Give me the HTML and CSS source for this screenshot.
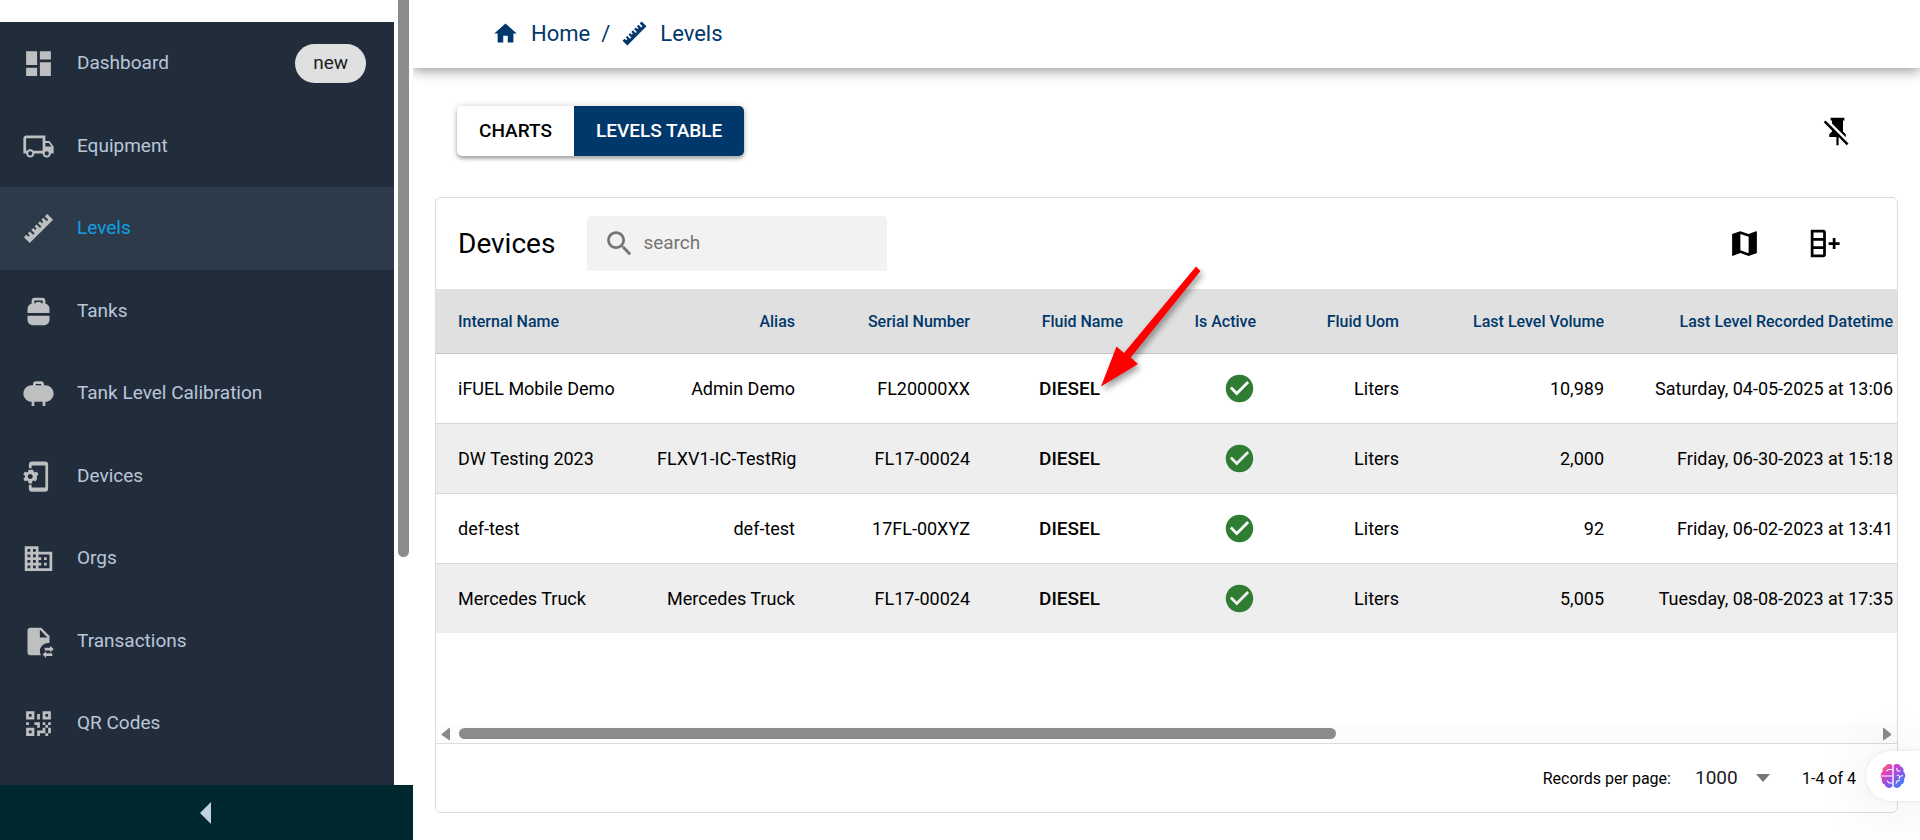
FILE: index.html
```html
<!DOCTYPE html>
<html lang="en">
<head>
<meta charset="utf-8">
<meta name="viewport" content="width=device-width, initial-scale=1">
<title>Levels</title>
<link rel="stylesheet" href="styles.css">
</head>
<body>
<svg class="sprite" aria-hidden="true">
  <symbol id="i-dashboard" viewBox="0 0 24 24"><path d="M13 3v6h8V3zM13 21h8V11h-8zM3 21h8v-6H3zM3 13h8V3H3z"/></symbol>
  <symbol id="i-truck" viewBox="0 0 24 24"><path d="M18 18.5C18.83 18.5 19.5 17.83 19.5 17C19.5 16.17 18.83 15.5 18 15.5C17.17 15.5 16.5 16.17 16.5 17C16.5 17.83 17.17 18.5 18 18.5M19.5 9.5H17V12H21.46L19.5 9.5M6 18.5C6.83 18.5 7.5 17.83 7.5 17C7.5 16.17 6.83 15.5 6 15.5C5.17 15.5 4.5 16.17 4.5 17C4.5 17.83 5.17 18.5 6 18.5M20 8L23 12V17H21C21 18.66 19.66 20 18 20C16.34 20 15 18.66 15 17H9C9 18.66 7.66 20 6 20C4.34 20 3 18.66 3 17H1V6C1 4.89 1.89 4 3 4H17V8H20M3 6V15H3.76C4.31 14.39 5.11 14 6 14C6.89 14 7.69 14.39 8.24 15H15V6H3Z"/></symbol>
  <symbol id="i-ruler" viewBox="0 0 24 24"><path d="M1.39,18.36L3.16,16.6L4.58,18L5.64,16.95L4.22,15.54L5.64,14.12L8.11,16.6L9.17,15.54L6.7,13.06L8.11,11.65L9.53,13.06L10.59,12L9.17,10.59L10.59,9.17L13.06,11.65L14.12,10.59L11.65,8.11L13.06,6.7L14.47,8.11L15.54,7.05L14.12,5.64L15.54,4.22L18,6.7L19.07,5.64L16.6,3.16L18.36,1.39L22.61,5.64L5.64,22.61L1.39,18.36Z"/></symbol>
  <symbol id="i-tank" viewBox="0 0 24 24"><path d="M4 15v3c0 2.21 1.79 4 4 4h8c2.21 0 4-1.79 4-4v-3zM20 13v-3c0-1.86-1.28-3.41-3-3.86V4c0-1.1-.9-2-2-2H9c-1.1 0-2 .9-2 2v2.14C5.28 6.59 4 8.14 4 10v3zM9 4h6v2h-1c0-.55-.45-1-1-1h-2c-.55 0-1 .45-1 1H9z"/></symbol>
  <symbol id="i-propane" viewBox="0 0 24 24"><path d="M17 6h-1V5c0-1.1-.9-2-2-2h-4c-1.1 0-2 .9-2 2v1H7c-2.97 0-5.46 2.16-5.92 5.03C.49 14.75 3.54 18 7 18v3h2v-3h6v3h2v-3c3.46 0 6.51-3.25 5.92-6.97C22.46 8.16 19.97 6 17 6zM10 5h4v1h-4z"/></symbol>
  <symbol id="i-device" viewBox="0 0 24 24"><path transform="translate(-1 0)" d="M11.82 12.49c.02-.16.04-.32.04-.49 0-.17-.02-.33-.04-.49l1.08-.82c.1-.07.12-.21.06-.32l-1.03-1.73c-.06-.11-.2-.15-.31-.11l-1.28.5c-.27-.2-.56-.36-.87-.49l-.2-1.33c0-.12-.11-.21-.24-.21H5.98c-.13 0-.24.09-.26.21l-.2 1.32c-.31.12-.6.3-.87.49l-1.28-.5c-.12-.05-.25 0-.31.11l-1.03 1.73c-.06.12-.03.25.07.33l1.08.82c-.02.16-.03.33-.03.49 0 .17.02.33.04.49l-1.09.83c-.1.07-.12.21-.06.32l1.03 1.73c.06.11.2.15.31.11l1.28-.5c.27.2.56.36.87.49l.2 1.32c.01.12.12.21.25.21h2.06c.13 0 .24-.09.25-.21l.2-1.32c.31-.12.6-.3.87-.49l1.28.5c.12.05.25 0 .31-.11l1.03-1.73c.06-.11.04-.24-.06-.32zM7 13.75c-.99 0-1.8-.78-1.8-1.75s.81-1.75 1.8-1.75 1.8.78 1.8 1.75-.81 1.75-1.8 1.75zM18 1H8c-1.1 0-2 .9-2 2v3h2V4h10v16H8v-2H6v3c0 1.1.9 2 2 2h10c1.1 0 2-.9 2-2V3c0-1.1-.9-2-2-2z"/></symbol>
  <symbol id="i-orgs" viewBox="0 0 24 24"><path d="M18,15H16V17H18M18,11H16V13H18M20,19H12V17H14V15H12V13H14V11H12V9H20M10,7H8V5H10M10,11H8V9H10M10,15H8V13H10M10,19H8V17H10M6,7H4V5H6M6,11H4V9H6M6,15H4V13H6M6,19H4V17H6M12,7V3H2V21H22V7H12Z"/></symbol>
  <symbol id="i-transactions" viewBox="0 0 24 24"><path d="M14 2H6c-1.11 0-2 .89-2 2v16c0 1.11.89 2 2 2h7.8c-.5-.9-.8-1.9-.8-3 0-3.3 2.600-6 6-6 .34 0 .67.030 1 .08V8zM13 9V3.500L18.500 9z"/><path d="M23 17.500 20.500 15v1.500h-4v2h4V20zM15 21.500 17.500 19v1.500h4.500v2h-4.500V24z"/></symbol>
  <symbol id="i-qr" viewBox="0 0 24 24"><path d="M3,11H5V13H3V11M11,5H13V9H11V5M9,11H13V15H11V13H9V11M15,11H17V13H19V11H21V13H19V15H21V19H19V21H17V19H13V21H11V17H15V15H17V13H15V11M19,19V15H17V19H19M15,3H21V9H15V3M17,5V7H19V5H17M3,3H9V9H3V3M5,5V7H7V5H5M3,15H9V21H3V15M5,17V19H7V17H5Z"/></symbol>
  <symbol id="i-home" viewBox="0 0 24 24"><path d="M10 20v-6h4v6h5v-8h3L12 3 2 12h3v8z"/></symbol>
  <symbol id="i-pin-off" viewBox="0 0 24 24"><path d="M2,5.27L3.28,4L20,20.72L18.73,22L12.8,16.07V22H11.2V16H6V14L8,12V11.27L2,5.27M16,12L18,14V16H17.82L8,6.18V4H7V2H17V4H16V12Z"/></symbol>
  <symbol id="i-map" viewBox="0 0 24 24"><path d="M20.500 3l-.16.030L15 5.100 9 3 3.360 4.900c-.21.070-.36.250-.36.480V20.500c0 .28.220.5.500.5l.16-.03L9 18.900l6 2.100 5.640-1.900c.21-.07.360-.25.360-.48V3.500c0-.28-.22-.5-.5-.5zM15 19l-6-2.110V5l6 2.110z"/></symbol>
  <symbol id="i-columns" viewBox="0 0 24 24"><path d="M11,2A2,2 0 0,1 13,4V20A2,2 0 0,1 11,22H2V2H11M4,10V14H11V10H4M4,16V20H11V16H4M4,4V8H11V4H4M15,11H18V8H20V11H23V13H20V16H18V13H15V11Z"/></symbol>
  <symbol id="i-search" viewBox="0 0 24 24"><path d="M15.500 14h-.79l-.28-.27C15.410 12.590 16 11.110 16 9.500 16 5.910 13.090 3 9.500 3S3 5.910 3 9.500 5.910 16 9.500 16c1.610 0 3.090-.59 4.230-1.570l.27.280v.79l5 4.990L20.490 19zm-6 0C7.010 14 5 11.990 5 9.500S7.010 5 9.500 5 14 7.010 14 9.500 11.990 14 9.500 14z"/></symbol>
  <symbol id="i-check" viewBox="0 0 24 24"><path d="M12 2C6.480 2 2 6.480 2 12s4.480 10 10 10 10-4.480 10-10S17.520 2 12 2zm-2 15l-5-5 1.410-1.410L10 14.170l7.590-7.590L19 8z"/></symbol>
</svg>

<div class="shell">
  <aside class="sidebar">
    <div class="menu-area">
      <nav class="menu">
        <a class="item" href="#"><svg class="icon"><use href="#i-dashboard"/></svg><span class="name">Dashboard</span><span class="chip">new</span></a>
        <a class="item" href="#"><svg class="icon"><use href="#i-truck"/></svg><span class="name">Equipment</span></a>
        <a class="item active" href="#" aria-current="page"><svg class="icon"><use href="#i-ruler"/></svg><span class="name">Levels</span></a>
        <a class="item" href="#"><svg class="icon"><use href="#i-tank"/></svg><span class="name">Tanks</span></a>
        <a class="item" href="#"><svg class="icon"><use href="#i-propane"/></svg><span class="name">Tank Level Calibration</span></a>
        <a class="item" href="#"><svg class="icon"><use href="#i-device"/></svg><span class="name">Devices</span></a>
        <a class="item" href="#"><svg class="icon"><use href="#i-orgs"/></svg><span class="name">Orgs</span></a>
        <a class="item" href="#"><svg class="icon"><use href="#i-transactions"/></svg><span class="name">Transactions</span></a>
        <a class="item" href="#"><svg class="icon"><use href="#i-qr"/></svg><span class="name">QR Codes</span></a>
      </nav>
      <div class="vbar"><div class="vthumb"></div></div>
    </div>
    <button class="collapse" type="button" aria-label="Collapse menu"><svg width="14" height="22" viewBox="0 0 14 22"><path d="M11 0v22L0 11z"/></svg></button>
  </aside>

  <div class="page">
    <header class="topbar">
      <nav class="crumbs" aria-label="Breadcrumb">
        <a class="crumb" href="#"><svg class="crumb-icon"><use href="#i-home"/></svg>Home</a>
        <span class="slash">/</span>
        <a class="crumb" href="#"><svg class="crumb-icon"><use href="#i-ruler"/></svg>Levels</a>
      </nav>
    </header>

    <main class="content">
      <div class="tabs-row">
        <div class="tabs">
          <button class="tab" type="button">CHARTS</button>
          <button class="tab selected" type="button">LEVELS TABLE</button>
        </div>
        <button class="icon-btn" type="button" aria-label="Unpin"><svg class="icon"><use href="#i-pin-off"/></svg></button>
      </div>

      <section class="card">
        <div class="card-top">
          <h1 class="title">Devices</h1>
          <label class="search"><svg class="icon"><use href="#i-search"/></svg><input type="text" placeholder="search" aria-label="search"></label>
          <div class="actions">
            <button class="icon-btn" type="button" aria-label="Map"><svg class="icon"><use href="#i-map"/></svg></button>
            <button class="icon-btn" type="button" aria-label="Add column"><svg class="icon"><use href="#i-columns"/></svg></button>
          </div>
        </div>

        <div class="table-wrap">
          <table class="grid">
            <colgroup><col class="c-name"><col class="c-alias"><col class="c-serial"><col class="c-fluid"><col class="c-active"><col class="c-uom"><col class="c-volume"><col class="c-date"></colgroup>
            <thead>
              <tr><th class="left">Internal Name</th><th>Alias</th><th>Serial Number</th><th>Fluid Name</th><th>Is Active</th><th>Fluid Uom</th><th>Last Level Volume</th><th>Last Level Recorded Datetime</th></tr>
            </thead>
            <tbody>
              <tr><td class="left">iFUEL Mobile Demo</td><td>Admin Demo</td><td>FL20000XX</td><td class="fluid">DIESEL</td><td><svg class="icon check" role="img" aria-label="Yes"><use href="#i-check"/></svg></td><td>Liters</td><td>10,989</td><td>Saturday, 04-05-2025 at 13:06</td></tr>
              <tr><td class="left">DW Testing 2023</td><td>FLXV1-IC-TestRig</td><td>FL17-00024</td><td class="fluid">DIESEL</td><td><svg class="icon check" role="img" aria-label="Yes"><use href="#i-check"/></svg></td><td>Liters</td><td>2,000</td><td>Friday, 06-30-2023 at 15:18</td></tr>
              <tr><td class="left">def-test</td><td>def-test</td><td>17FL-00XYZ</td><td class="fluid">DIESEL</td><td><svg class="icon check" role="img" aria-label="Yes"><use href="#i-check"/></svg></td><td>Liters</td><td>92</td><td>Friday, 06-02-2023 at 13:41</td></tr>
              <tr><td class="left">Mercedes Truck</td><td>Mercedes Truck</td><td>FL17-00024</td><td class="fluid">DIESEL</td><td><svg class="icon check" role="img" aria-label="Yes"><use href="#i-check"/></svg></td><td>Liters</td><td>5,005</td><td>Tuesday, 08-08-2023 at 17:35</td></tr>
            </tbody>
          </table>
        </div>

        <div class="hbar">
          <svg width="10" height="14" viewBox="0 0 10 14"><path d="M9 1.500v11q0 1-1 .5L1 8.300Q0 7.500 1 6.700L8 1Q9 .5 9 1.500z"/></svg>
          <div class="htrack"><div class="hthumb"></div></div>
          <svg width="10" height="14" viewBox="0 0 10 14"><path d="M1 1.500v11q0 1 1 .5l7-4.700q1-.8 0-1.600L2 1Q1 .5 1 1.500z"/></svg>
        </div>

        <footer class="pager">
          <label for="rpp">Records per page:</label>
          <span class="select"><select id="rpp"><option>1000</option></select><svg width="14" height="8" viewBox="0 0 14 8"><path d="M0 0h14L7 8z"/></svg></span>
          <span>1-4 of 4</span>
        </footer>
      </section>
    </main>
  </div>
</div>

<svg class="pointer" width="120" height="140" viewBox="0 0 120 140" aria-hidden="true">
  <path d="M106 10.500 34 97 26.500 90.500 11 130.500 48 108 40.700 101.500 110.500 15z"/>
</svg>

<button class="assistant" type="button" aria-label="Assistant">
  <svg width="26" height="26" viewBox="0 0 26 26">
    <defs><linearGradient id="g" x1="0" y1="0" x2="1" y2="1"><stop offset="0" stop-color="#ff8a2b"/><stop offset=".28" stop-color="#e23fc0"/><stop offset=".6" stop-color="#8455e8"/><stop offset="1" stop-color="#1f9bff"/></linearGradient></defs>
    <path fill="url(#g)" d="M12.300 2.500C10.500.2 6.500.6 5.300 3.400 2.800 4 2 6.500 2.700 8.600.2 10.500.100 14 1.900 15.800c-.7 2.900.7 5 2.800 5.700 1 3.600 5.600 4.500 7.600 2zM13.700 2.500C15.500.2 19.500.6 20.700 3.400c2.500.6 3.300 3.100 2.600 5.200 2.500 1.900 2.600 5.400.8 7.200.7 2.900-.7 5-2.800 5.700-1 3.600-5.600 4.500-7.600 2z"/>
    <path fill="none" stroke="#fff" stroke-width="1.100" d="M12.500 6.500H8.500L6.500 8M1 13h11.500M12.500 20H9l-2-2.500M16.500 5l1 3h3M17 12l3 1.500 3-1M20 13.500 19 16M16 20.500l1-2.500 3-.5"/>
  </svg>
</button>
</body>
</html>
```
FILE: styles.css
```css
* { box-sizing: border-box; }

body {
  margin: 0;
  font-family: Roboto, "Liberation Sans", sans-serif;
  font-size: 18px;
  color: #000;
  background: #fff;
  overflow: hidden;
}

button, input, select { font: inherit; color: inherit; border: 0; background: none; padding: 0; margin: 0; }
a { color: inherit; text-decoration: none; }
svg { display: block; flex: none; fill: currentColor; }

.sprite { position: absolute; width: 0; height: 0; }
.icon { width: 33px; height: 33px; }

.shell { display: flex; height: 100vh; }

/* Sidebar */
.sidebar { display: flex; flex-direction: column; width: 413px; flex: none; }
.menu-area { flex: 1; min-height: 0; display: flex; gap: 4px; }
.menu {
  flex: 1;
  margin-top: 22px;
  background: #212d3b;
  color: #b9c6da;
  font-size: 19px;
  display: grid;
  grid-auto-rows: 83px 82px;
  align-content: start;
  overflow: hidden;
}
.item { display: flex; align-items: center; gap: 22px; padding: 0 28px 0 22px; }
.item .icon { color: #bdbfc0; }
.item.active { background: #2d3a49; color: #0ea0e6; }
.name { flex: 1; padding-bottom: 2px; }
.chip { background: #e0e0e0; color: #202020; border-radius: 20px; padding: 0 18px 2px; line-height: 37px; }
.vbar { width: 15px; display: flex; flex-direction: column; }
.vthumb { width: 11px; height: 71%; background: #8b8b8b; border-radius: 0 0 6px 6px; }
.collapse { height: 55px; background: #00292f; color: #c3cfe2; display: flex; align-items: center; justify-content: center; }

/* Top bar */
.page { flex: 1; min-width: 0; display: flex; flex-direction: column; }
.topbar { height: 68px; flex: none; display: flex; align-items: center; padding: 0 0 2px 79px; box-shadow: 0 3px 12px rgba(0, 0, 0, .4); clip-path: inset(0 0 -20px 0); }
.crumbs { display: flex; align-items: center; gap: 11px; color: #00386b; font-size: 22px; }
.crumb { display: flex; align-items: center; gap: 12px; }
.crumb-icon { width: 27px; height: 27px; }

/* Content */
.content { flex: 1; min-height: 0; display: flex; flex-direction: column; padding: 38px 22px 27px; }
.tabs-row { display: flex; align-items: center; justify-content: space-between; padding: 0 44px 41px 22px; }
.tabs { display: flex; border-radius: 5px; overflow: hidden; box-shadow: 0 1px 6px rgba(0, 0, 0, .25), 0 3px 3px rgba(0, 0, 0, .2); }
.tab { height: 50px; padding: 0 22px 2px; font-size: 19px; font-weight: 500; }
.tab.selected { background: #00386b; color: #fff; }

.card { flex: 1; min-height: 0; display: flex; flex-direction: column; border: 1px solid #dcdcdc; border-radius: 6px; }
.card-top { display: flex; align-items: center; padding: 18px 56px 18px 22px; }
.title { margin: 0 32px 0 0; font-size: 28px; font-weight: 400; }
.search { display: flex; align-items: center; gap: 7px; width: 300px; height: 55px; padding: 0 16px; background: #f2f2f2; border-radius: 5px 5px 0 0; color: #757575; }
.search input { flex: 1; min-width: 0; font-size: 19px; padding-bottom: 2px; }
.search input::placeholder { color: #757575; opacity: 1; }
.actions { margin-left: auto; display: flex; gap: 47px; }

.table-wrap { flex: 1; min-height: 0; overflow: hidden; }
.grid { width: 1479px; table-layout: fixed; border-collapse: separate; border-spacing: 0; white-space: nowrap; }
.c-name { width: 199px; }
.c-alias { width: 182px; }
.c-serial { width: 175px; }
.c-fluid { width: 153px; }
.c-active { width: 133px; }
.c-uom { width: 143px; }
.c-volume { width: 205px; }
.c-date { width: 289px; }
.grid th, .grid td { padding: 0 22px; text-align: right; }
.grid th { height: 65px; background: #e0e0e0; color: #00386b; font-size: 16px; font-weight: 500; border-bottom: 1px solid #c4c4c4; }
.grid td { height: 70px; padding-bottom: 1px; border-bottom: 1px solid #d6d6d6; }
.grid .left { text-align: left; }
.grid .fluid { text-align: left; padding: 0 0 0 47px; font-size: 19px; font-weight: 500; }
.grid tbody tr:nth-child(even) { background: #eee; }
.grid tbody tr:last-child td { height: 69px; border-bottom: 0; }
.check { color: #2e7d32; margin-left: auto; }

.hbar { display: flex; align-items: center; gap: 8px; padding: 0 5px; height: 19px; background: #fcfcfc; color: #8b8b8b; }
.htrack { flex: 1; }
.hthumb { width: 62%; height: 11px; border-radius: 6px; background: #8b8b8b; }

.pager { height: 69px; border-top: 1px solid #dcdcdc; display: flex; align-items: center; justify-content: flex-end; gap: 24px; padding-right: 41px; font-size: 16px; }
.select { display: flex; align-items: center; gap: 18px; padding-right: 8px; color: #757575; }
.select select { appearance: none; color: #202020; font-size: 19px; padding-bottom: 2px; }

/* Overlays */
.pointer { position: absolute; left: 1090px; top: 256px; color: #f00; filter: drop-shadow(2px 4px 3px rgba(0, 0, 0, .4)); pointer-events: none; }
.assistant { position: absolute; right: 0; bottom: 39px; width: 54px; height: 50px; padding-left: 14px; background: #fff; border-radius: 25px 0 0 25px; box-shadow: 0 0 4px rgba(0, 0, 0, .08), 0 4px 60px rgba(0, 0, 0, .1); }
```
